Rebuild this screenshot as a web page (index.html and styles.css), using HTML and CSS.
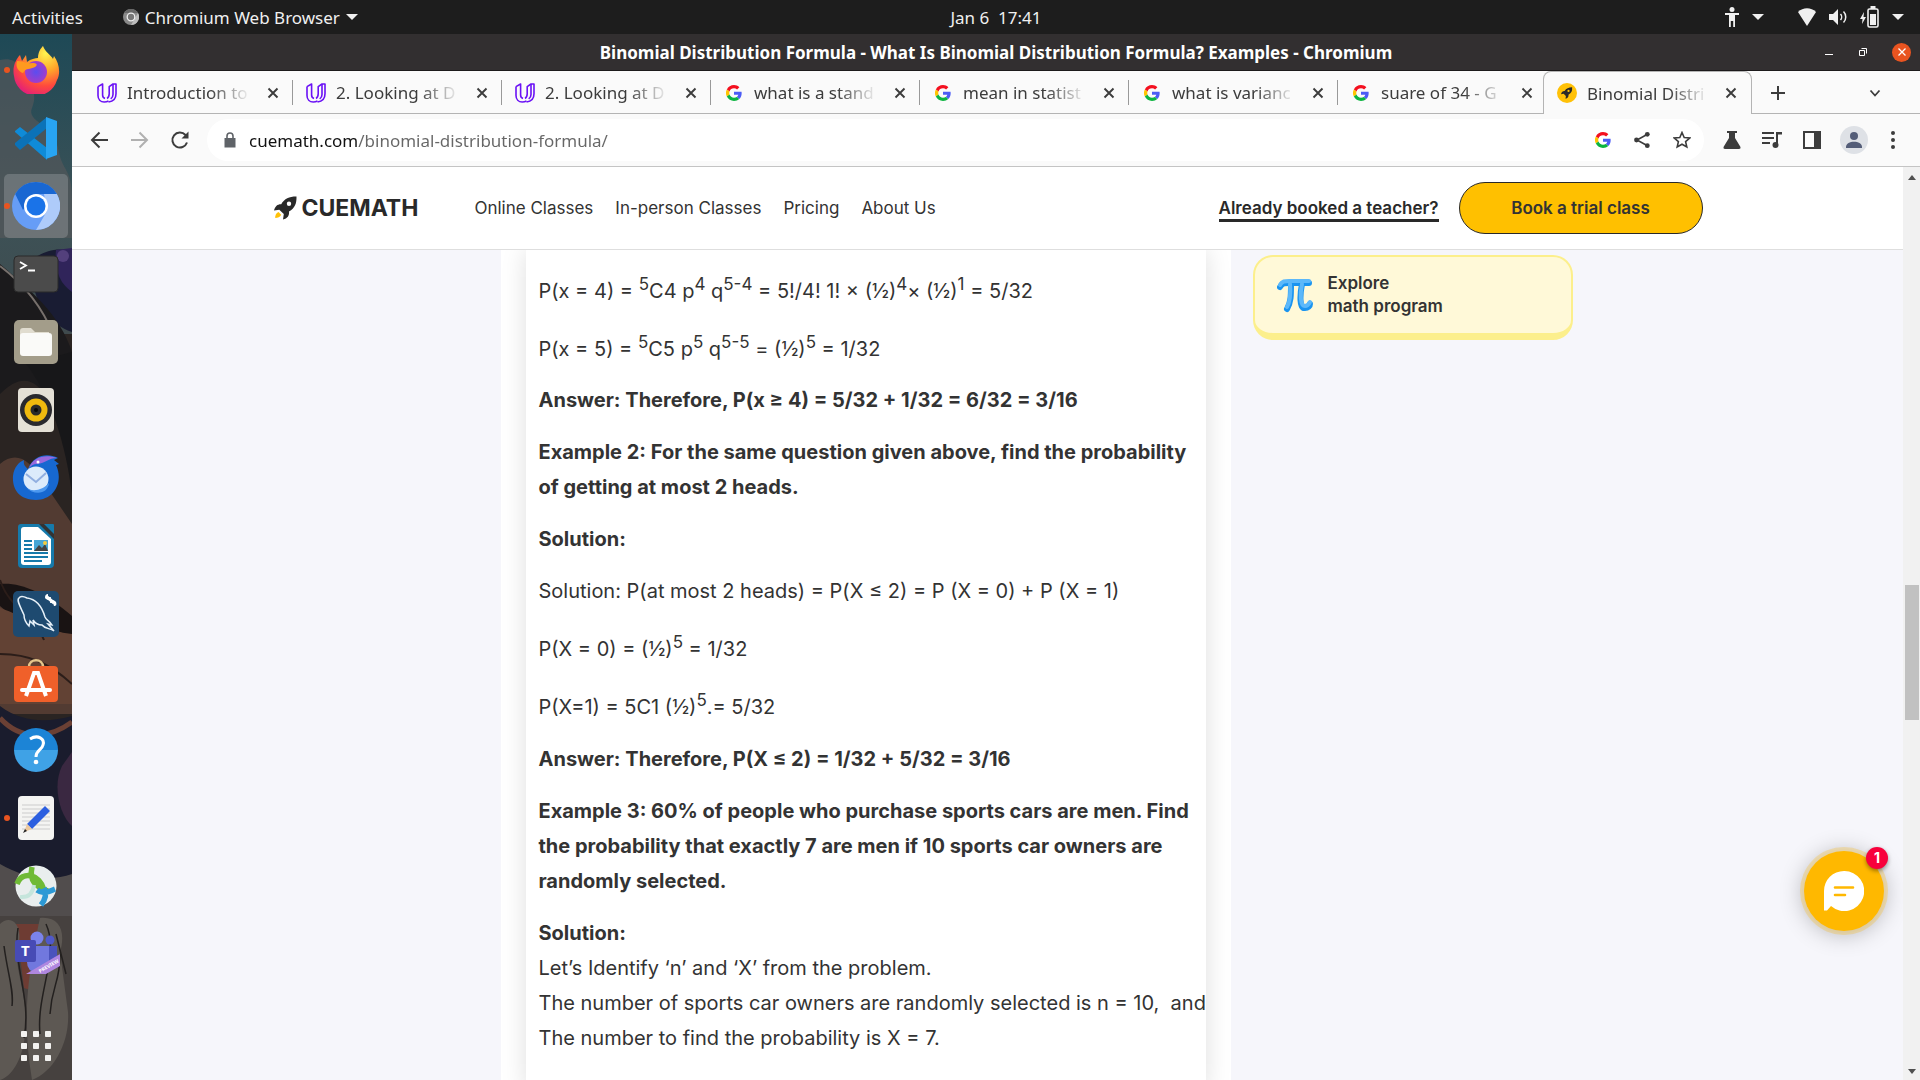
FILE: index.html
```html
<!DOCTYPE html>
<html lang="en">
<head>
<meta charset="utf-8">
<title>Binomial Distribution Formula - What Is Binomial Distribution Formula? Examples</title>
<link rel="stylesheet" href="styles.css">
</head>
<body>
<svg class="defs" aria-hidden="true">
  <defs>
    <symbol id="udacity" viewBox="0 0 20 20"><g fill="none" stroke="#6a11f5" stroke-width="1.6" stroke-linejoin="round"><path d="M1 3.600 5.600 1v11c0 2 1 3 2.400 3.600"/><path d="M1 3.600v8.800c0 4 2.600 6.600 6.200 6.600 1.600 0 3-.3 4.300-1"/><path d="M10 15.500c1.500-.8 2.200-2.200 2.200-4.700V3.600L16 1h3v9.800c0 4.600-3 7.700-7.500 8.200"/><path d="M16 1v10.400c0 2-.8 3.400-2.300 4.500"/></g></symbol>
    <symbol id="google" viewBox="0 0 48 48"><path fill="#f4101f" d="M24 10c3.500 0 6.700 1.200 9.200 3.600l6.900-6.900C35.900 2.700 30.500 0 24 0 14.600 0 6.500 5.400 2.600 13.200l8 6.200C12.400 13.700 17.700 10 24 10z"/><path fill="#4c5cf5" d="M47 24.500c0-1.600-.2-3.100-.4-4.500H24v9h12.900c-.6 3-2.300 5.500-4.800 7.200l7.700 6C44.400 38 47 31.800 47 24.500z"/><path fill="#ffc400" d="M10.500 28.600A14.500 14.500 0 0 1 10.500 19.400l-8-6.200A24 24 0 0 0 2.500 34.800z"/><path fill="#0cb440" d="M24 48c6.500 0 11.900-2.100 15.900-5.800l-7.700-6C30 37.700 27.200 38.500 24 38.500c-6.300 0-11.600-4.200-13.500-9.900l-8 6.200C6.500 42.600 14.600 48 24 48z"/></symbol>
    <symbol id="rocket" viewBox="0 0 24 24"><path fill="#292929" fill-rule="evenodd" d="M23.500.5C16.500.4 11.500 2.500 8.200 8.200 4.700 8 2.200 10 1 14.500l5.300-.8 4.500 4.200L10 23.500c4.500-1 6.500-4 6-8C22 12 23.700 7.500 23.500.5zM16 10a2.200 2.200 0 1 0 0-4.400A2.200 2.200 0 0 0 16 10z"/><path fill="#ffc107" d="M5.500 16C3 17 2 19.500 2.200 22c2.600 0 5-1 6-3.200z"/></symbol>
    <symbol id="close" viewBox="0 0 12 12"><path d="m1.500 1.500 9 9m0-9-9 9" stroke="currentColor" stroke-width="1.900"/></symbol>
    <symbol id="caret" viewBox="0 0 12 8"><path d="M0 1h12L6 7z" fill="currentColor"/></symbol>
  </defs>
</svg>

<div class="desktop">
  <header class="topbar">
    <div class="topbar-left">
      <button class="plain">Activities</button>
      <button class="plain app-menu">
        <svg width="16" height="16" viewBox="0 0 16 16"><circle cx="8" cy="8" r="8" fill="#8a8a8a"/><path d="M1 4a8 8 0 0 1 14 0H8z" fill="#686868"/><path d="M15 4a8 8 0 0 1-7 12l4-7z" fill="#bdbdbd"/><circle cx="8" cy="8" r="3.800" fill="#777" stroke="#eee" stroke-width="1.300"/></svg>
        Chromium Web Browser
        <svg width="12" height="8"><use href="#caret"/></svg>
      </button>
    </div>
    <time class="clock">Jan 6&nbsp; 17:41</time>
    <div class="topbar-right">
      <button class="plain" aria-label="Accessibility"><svg width="16" height="22" viewBox="0 0 16 22"><circle cx="8" cy="3.500" r="2.500" fill="currentColor"/><path d="M1 7h14v2h-4v12H9.200v-6H6.800v6H5V9H1z" fill="currentColor"/></svg><svg width="12" height="8"><use href="#caret"/></svg></button>
      <button class="plain status" aria-label="System">
        <svg width="18" height="20" viewBox="0 0 18 20"><path d="M0 5c5-5 13-5 18 0L9 19z" fill="currentColor"/></svg>
        <svg width="20" height="20" viewBox="0 0 20 20"><path d="M1 7h4l5-5v16l-5-5H1z" fill="currentColor"/><path d="M12.500 7c1.500 1.600 1.500 4.400 0 6M15.500 4.500c3 3 3 8 0 11" fill="none" stroke="currentColor" stroke-width="1.500"/></svg>
        <svg width="20" height="22" viewBox="0 0 20 22"><path d="M4 6 0 13h2.500L2 18l4-7H3.500z" fill="currentColor"/><rect x="8" y="3" width="10" height="18" rx="1.500" fill="none" stroke="currentColor" stroke-width="1.600"/><path d="M10.500 0h5v3h-5zM10 8h6v11h-6z" fill="currentColor"/></svg>
        <svg width="12" height="8"><use href="#caret"/></svg>
      </button>
    </div>
  </header>

  <div class="workspace">
    <nav class="dock" aria-label="Applications">
      <svg class="wallpaper" viewBox="0 0 72 1046" preserveAspectRatio="none" aria-hidden="true">
        <defs><linearGradient id="sky" x1="0" y1="0" x2="0" y2="1"><stop offset="0" stop-color="#1e4956"/><stop offset=".6" stop-color="#3d5257"/><stop offset="1" stop-color="#3f4a4d"/></linearGradient></defs>
        <rect width="72" height="1046" fill="#2a2422"/>
        <rect width="72" height="300" fill="url(#sky)"/>
        <path d="M0 26c16-4 24 8 18 22 14 0 20 12 14 26s22 16 26 40 14 20 14 50v40H0z" fill="#56575a" opacity=".65"/>
        <path d="M32 226c10-8 26-14 40-8v80c-24-8-42-30-40-72z" fill="#191c33"/><path d="M56 216c-2 20 4 34 16 42v-44z" fill="#30245a"/><circle cx="63" cy="222" r="6" fill="#53407c"/>
        <path d="M0 230c30 26 60 50 72 88v110C50 350 30 330 0 360z" fill="#1b1a1c"/>
        <path d="M0 232c24 18 42 40 54 70" stroke="#77706c" stroke-width="2" fill="none"/>
        <path d="M0 430c16-14 30-4 42 16l30 44v190H0z" fill="#523b32"/>
        <path d="M26 330c24 30 40 80 46 130V318z" fill="#171719"/>
        <path d="M0 550c20-2 44 8 72 32v22C44 600 20 590 0 572z" fill="#191313"/>
        <path d="M0 574c24 8 48 24 72 26v70H0z" fill="#624234"/>
        <path d="M0 620c30 0 50 10 72 30M0 546c10 30 34 34 44 60" stroke="#2b1d19" stroke-width="2" fill="none"/>
        <path d="M0 672c24 18 50 16 72 10v170H0z" fill="#1a1c2d"/><path d="M62 732c-10 20-2 50 10 60v-74z" fill="#3a2841"/>
        <path d="M0 684c20 22 48 22 72 4" stroke="#6b4034" stroke-width="5" fill="none"/>
        <path d="M0 830c24 14 50 18 72 10v46H0z" fill="#514d4d"/>
        <path d="M0 882h72v164H0z" fill="#46413f"/><path d="M16 890h26v70l-18-6z" fill="#6e3c33"/>
        <path d="M0 890c10-10 24 0 18 22s14 54 6 96c-4 24-16 36-24 38zM40 884c20-2 26 14 20 34l8 60c2 30-14 60-36 68-8-50-8-90 8-162z" fill="#5d5853"/>
        <path d="M18 894c-6 36 14 70 6 110M46 890c14 30-10 70-6 110m20-80c0 30-8 30-10 60M4 912c4 30 10 44 8 60M56 900l10 40" stroke="#23201f" stroke-width="1.500" fill="none"/>
      </svg>
      <button class="app running" aria-label="Firefox"><svg viewBox="0 0 48 48"><defs><radialGradient id="ff" cx=".7" cy=".15" r="1"><stop offset="0" stop-color="#fff44f"/><stop offset=".35" stop-color="#ffa72a"/><stop offset=".65" stop-color="#ff4a3c"/><stop offset="1" stop-color="#d9108f"/></radialGradient><radialGradient id="fp"><stop offset="0" stop-color="#5b4df0"/><stop offset="1" stop-color="#a33cc8"/></radialGradient></defs><path d="M26 12c0-6 3-10 5-12 2 6 8 9 10 13l1-3c5 7 7 17 3 24A22 22 0 0 1 2 30C0 21 4 13 8 9l2 6 4-6 1 7c4-3 8-4 11-4z" fill="url(#ff)"/><circle cx="24" cy="26" r="11" fill="url(#fp)"/><path d="M5 15c6 0 9 3 15 2 5 0 6 2 3 4-5 3-9 0-12 6-4-1-8-6-6-12z" fill="#ff9a1f"/></svg></button>
      <button class="app" aria-label="Visual Studio Code"><svg viewBox="0 0 48 48"><path d="m3 17 5-4 27 21v12L3 18z" fill="#0f8bd8"/><path d="m3 31 5 5 27-22V3L3 29z" fill="#0b72b8"/><path d="m34 3 11 4v34l-11 4z" fill="#28a4f2"/></svg></button>
      <button class="app running active" aria-label="Chromium"><svg viewBox="0 0 48 48"><circle cx="24" cy="24" r="24" fill="#669df6"/><path d="M24 0a24 24 0 0 1 20.800 12H24L11 28 3.200 12A24 24 0 0 1 24 0z" fill="#1967d2"/><path d="M44.800 12A24 24 0 0 1 24 48l11-19-3-17z" fill="#aecbfa"/><circle cx="24" cy="24" r="12" fill="#fff"/><circle cx="24" cy="24" r="9.500" fill="#1a73e8"/></svg></button>
      <button class="app" aria-label="Terminal"><svg viewBox="0 0 48 48"><rect x="2" y="6" width="44" height="36" rx="4" fill="#4b4b4b" stroke="#2a2a2a"/><path d="m8 12 6 3.500L8 19m8 1.500h7" fill="none" stroke="#fff" stroke-width="1.800"/></svg></button>
      <button class="app" aria-label="Files"><svg viewBox="0 0 48 48"><rect x="2" y="2" width="44" height="44" rx="5" fill="#a39d8a"/><path d="M8 13q0-3 3-3h8l4 4h14v8H8z" fill="#e0dccf"/><rect x="8" y="15" width="32" height="23" rx="3" fill="#fafaf8"/></svg></button>
      <button class="app" aria-label="Rhythmbox"><svg viewBox="0 0 48 48"><rect x="6" y="2" width="36" height="44" rx="4" fill="#e4e0d6"/><circle cx="24" cy="24" r="16" fill="#29292e"/><circle cx="24" cy="24" r="11.500" fill="#efb90e"/><circle cx="24" cy="24" r="5.500" fill="#2a2a2a"/><circle cx="24" cy="24" r="2" fill="#080808"/></svg></button>
      <button class="app" aria-label="Thunderbird"><svg viewBox="0 0 48 48"><path d="M1 22C2 13 7 8 12 6c-1 5 2 7 4 9C22 0 36-1 46 4l-4 2 5 4-3 1c8 17-2 35-20 35C8 46 0 36 1 22z" fill="#1768d0"/><path d="M17 14c4-11 16-14 28-10-9 0-11 5-20 6-4 0-6 2-8 4z" fill="#9869dd"/><circle cx="24" cy="25" r="12.500" fill="#dcebfb"/><path d="m14 20 10 8 10-9" fill="none" stroke="#91afe0" stroke-width="2"/><path d="M13 33c7 6 18 3 24-4-1 10-13 14-24 4z" fill="#4c98ef"/><circle cx="26" cy="8" r="1.500" fill="#fff"/></svg></button>
      <button class="app" aria-label="LibreOffice Writer"><svg viewBox="0 0 48 48"><path d="M9 2h32q1 0 1 1v39q0 4-4 4H10q-4 0-4-4V5q0-3 3-3z" fill="#167aab"/><path d="M12 5h14l13 12v23q0 3-3 3H12q-3 0-3-3V8q0-3 3-3z" fill="#fff"/><path d="M27 2h5l10 10v5z" fill="#333"/><path d="M12 19h8m-8 4h8m-8 4h8m-8 4h24m-24 4h24m-24 4h18" stroke="#167aab" stroke-width="2"/><path d="M22 18h14v11H22z" fill="#46a6d6"/><path d="m22 29 5-6 3 3 3-4 3 7z" fill="#444"/><circle cx="33" cy="21" r="2" fill="#f4cc40"/></svg></button>
      <button class="app" aria-label="MySQL Workbench"><svg viewBox="0 0 48 48"><rect x="1" y="1" width="46" height="46" rx="5" fill="#1e4a70"/><path d="M12 25C9 18 4 10 7 8c2-3 6-1 8 0 9 1 15 9 18 19 1 3 5 4 7 8l-4-1 6 7c-4-3-9-2-12-6-4 0-7-2-9-5l1 5-4-4-1 5c-3-3-5-7-5-11z" fill="none" stroke="#e6f0f8" stroke-width="1.500"/><path d="m35 7 7 6" stroke="#fff" stroke-width="3"/><path d="M33 8c0-3 1-4 3-4v3h3c0 3-4 4-6 1zM44 12c1 3 0 4-2 4l-1-3h-3c0-3 4-4 6-1z" fill="#fff"/></svg></button>
      <button class="app" aria-label="Ubuntu Software"><svg viewBox="0 0 48 48"><path d="M17 9c0-9 14-9 14 0" fill="none" stroke="#e5c68b" stroke-width="2.500"/><rect x="2" y="8" width="44" height="36" rx="4" fill="#f0602a"/><path d="M10 32h28" stroke="#fff" stroke-width="4" stroke-linecap="round"/><path d="m14 38 8-23h4l8 23" fill="none" stroke="#fff" stroke-width="4"/></svg></button>
      <button class="app" aria-label="Help"><svg viewBox="0 0 48 48"><path d="M2 24a22 22 0 0 1 44 0z" fill="#1c84d6"/><path d="M2 24a22 22 0 0 0 44 0z" fill="#3fa2e6"/><path d="M18 13c8-5 15 0 13 6-1 5-7 5-7 12" fill="none" stroke="#fff" stroke-width="3"/><circle cx="24" cy="36" r="2.300" fill="#fff"/></svg></button>
      <button class="app running" aria-label="Text Editor"><svg viewBox="0 0 48 48"><rect x="6" y="2" width="36" height="44" rx="4" fill="#f4f4f2"/><path d="M10 11h28M10 15h28M10 19h28M10 23h28M10 27h28M10 31h28M10 35h28" stroke="#ccc"/><path d="m15 30 18-18 5 5-18 18z" fill="#2c5fe0"/><path d="m15 30 5 5-8 3z" fill="#ecc9a0"/><path d="m13 35-2 4 4-2z" fill="#222"/></svg></button>
      <button class="app" aria-label="Cisco AnyConnect"><svg viewBox="0 0 48 48"><circle cx="24" cy="24" r="20.500" fill="#e9eeee"/><path d="M5 22C10 8 28 12 32 28M20 5c-3 14 4 20 16 24" fill="none" stroke="#6fba36" stroke-width="5.500"/><path d="M8 35c10 1 13-5 14-12" fill="none" stroke="#c5e5dc" stroke-width="4"/><path d="M32 26c3 6 1 12-3 17M25 28c7 5 13 1 18-1" fill="none" stroke="#2c99d5" stroke-width="5.500"/></svg></button>
      <button class="app" aria-label="Microsoft Teams"><svg viewBox="0 0 48 48"><circle cx="25" cy="8" r="6.500" fill="#7b83eb"/><circle cx="38" cy="10" r="4.500" fill="#5059c9"/><path d="M32 16h13v16q-8 12-13 0z" fill="#4b53bc"/><path d="M18 16h19v16q-2 10-12 10T15 32z" fill="#7178de"/><rect x="3" y="10" width="21" height="22" rx="2" fill="#474bb5"/><path d="m14 44 34-20v12L34 44z" fill="#af87df"/><text x="9" y="26" class="teams-letter">T</text><text x="28" y="43" class="teams-tag" transform="rotate(-30 28 43)">PREVIEW</text></svg></button>
      <button class="app show-apps" aria-label="Show Applications"><svg viewBox="0 0 48 48"><path d="M9.500 9.500h5v5h-5zm12 0h5v5h-5zm12 0h5v5h-5zm-24 12h5v5h-5zm12 0h5v5h-5zm12 0h5v5h-5zm-24 12h5v5h-5zm12 0h5v5h-5zm12 0h5v5h-5z" fill="#f3f2f0" stroke="#f3f2f0" stroke-linejoin="round"/></svg></button>
    </nav>

    <div class="window">
      <div class="titlebar">
        <span class="window-title">Binomial Distribution Formula - What Is Binomial Distribution Formula? Examples - Chromium</span>
        <div class="window-controls">
          <button class="plain" aria-label="Minimize"><svg width="10" height="10"><path d="M1 7.500h8" stroke="currentColor"/></svg></button>
          <button class="plain" aria-label="Restore"><svg width="10" height="10"><path d="M1.500 3.500h5v5h-5zM3.500 1.500h5v5" fill="none" stroke="currentColor"/></svg></button>
          <button class="plain quit" aria-label="Close"><svg width="8" height="8" viewBox="0 0 8 8"><path d="m.5.5 7 7m0-7-7 7" stroke="currentColor" stroke-width="1.300"/></svg></button>
        </div>
      </div>

      <div class="tabs">
        <div class="tab"><svg class="favicon"><use href="#udacity"/></svg><a href="#">Introduction to</a><button class="plain" aria-label="Close tab"><svg width="12" height="12"><use href="#close"/></svg></button></div>
        <div class="tab"><svg class="favicon"><use href="#udacity"/></svg><a href="#">2. Looking at D</a><button class="plain" aria-label="Close tab"><svg width="12" height="12"><use href="#close"/></svg></button></div>
        <div class="tab"><svg class="favicon"><use href="#udacity"/></svg><a href="#">2. Looking at D</a><button class="plain" aria-label="Close tab"><svg width="12" height="12"><use href="#close"/></svg></button></div>
        <div class="tab"><svg class="favicon g"><use href="#google"/></svg><a href="#">what is a stand</a><button class="plain" aria-label="Close tab"><svg width="12" height="12"><use href="#close"/></svg></button></div>
        <div class="tab"><svg class="favicon g"><use href="#google"/></svg><a href="#">mean in statist</a><button class="plain" aria-label="Close tab"><svg width="12" height="12"><use href="#close"/></svg></button></div>
        <div class="tab"><svg class="favicon g"><use href="#google"/></svg><a href="#">what is varianc</a><button class="plain" aria-label="Close tab"><svg width="12" height="12"><use href="#close"/></svg></button></div>
        <div class="tab"><svg class="favicon g"><use href="#google"/></svg><a href="#">suare of 34 - G</a><button class="plain" aria-label="Close tab"><svg width="12" height="12"><use href="#close"/></svg></button></div>
        <div class="tab current"><svg class="favicon" viewBox="0 0 20 20"><circle cx="10" cy="10" r="10" fill="#ffc107"/><use href="#rocket" x="3.500" y="4" width="12" height="12"/></svg><a href="#">Binomial Distri</a><button class="plain" aria-label="Close tab"><svg width="12" height="12"><use href="#close"/></svg></button></div>
        <div class="tab-tools">
          <button class="plain" aria-label="New tab"><svg width="16" height="16"><path d="M8 1v14M1 8h14" stroke="currentColor" stroke-width="2"/></svg></button>
          <button class="plain" aria-label="Search tabs"><svg width="12" height="12"><path d="m1.500 3.500 4.500 5 4.500-5" fill="none" stroke="currentColor" stroke-width="1.800"/></svg></button>
        </div>
      </div>

      <div class="toolbar">
        <div class="nav-buttons">
          <button class="plain" aria-label="Back"><svg width="20" height="20" viewBox="0 0 20 20"><path d="M18 10H2m7.500-7.500L2 10l7.500 7.500" fill="none" stroke="currentColor" stroke-width="2"/></svg></button>
          <button class="plain muted" aria-label="Forward"><svg width="20" height="20" viewBox="0 0 20 20"><path d="M1 10h16M9.500 2.500 17 10l-7.500 7.500" fill="none" stroke="currentColor" stroke-width="2"/></svg></button>
          <button class="plain" aria-label="Reload"><svg width="20" height="20" viewBox="0 0 20 20"><path d="M17 12.500A7.500 7.500 0 1 1 15.500 5l1 1" fill="none" stroke="currentColor" stroke-width="2"/><path d="M18.500 1.500v7h-7z" fill="currentColor"/></svg></button>
        </div>
        <div class="omnibox">
          <svg width="12" height="16" viewBox="0 0 12 16"><path d="M.5 6h11v9.500H.5z" fill="#5f6368"/><path d="M3 7V4a3 3 0 0 1 6 0v3" fill="none" stroke="#5f6368" stroke-width="1.600"/></svg>
          <input type="text" aria-label="Address" value="cuemath.com/binomial-distribution-formula/">
          <div class="omni-icons">
            <button class="plain" aria-label="Search with Google"><svg width="16" height="16"><use href="#google"/></svg></button>
            <button class="plain" aria-label="Share"><svg width="18" height="18" viewBox="0 0 18 18"><path d="M14 3.500 4 9l10 5.500" fill="none" stroke="currentColor" stroke-width="1.600"/><circle cx="14.300" cy="3.300" r="2.400" fill="currentColor"/><circle cx="3.500" cy="9" r="2.400" fill="currentColor"/><circle cx="14.300" cy="14.700" r="2.400" fill="currentColor"/></svg></button>
            <button class="plain" aria-label="Bookmark"><svg width="18" height="18" viewBox="0 0 18 18"><path d="m9 1.500 2.200 5 5.500.5-4.100 3.600 1.200 5.400L9 13.200 4.200 16l1.200-5.400L1.300 7l5.500-.5z" fill="none" stroke="currentColor" stroke-width="1.600"/></svg></button>
          </div>
        </div>
        <div class="actions">
          <button class="plain" aria-label="Experiments"><svg width="18" height="18" viewBox="0 0 18 18"><path d="M4 0h10v2h-2v5l5.500 9q.5 2-1.500 2H2q-2 0-1.500-2L6 7V2H4z" fill="currentColor"/></svg></button>
          <button class="plain" aria-label="Media"><svg width="20" height="18" viewBox="0 0 20 18"><path d="M0 2h12M0 7h12M0 12h8" stroke="currentColor" stroke-width="2"/><path d="M14 1h6v2.500h-4V14h-2z" fill="currentColor"/><circle cx="13.500" cy="14" r="3" fill="currentColor"/></svg></button>
          <button class="plain" aria-label="Side panel"><svg width="18" height="18"><path d="M1 1h16v16H1z" fill="none" stroke="currentColor" stroke-width="2"/><path d="M11 0h7v18h-7z" fill="currentColor"/></svg></button>
          <button class="plain" aria-label="Profile"><svg width="28" height="28" viewBox="0 0 28 28"><circle cx="14" cy="14" r="14" fill="#dee1e6"/><circle cx="14" cy="10" r="4" fill="#545d78"/><path d="M6 21c0-7 16-7 16 0v1H6z" fill="#545d78"/></svg></button>
          <button class="plain" aria-label="Menu"><svg width="4" height="18"><circle cx="2" cy="2" r="2" fill="currentColor"/><circle cx="2" cy="9" r="2" fill="currentColor"/><circle cx="2" cy="16" r="2" fill="currentColor"/></svg></button>
        </div>
      </div>

      <div class="viewport">
        <div class="page">
          <header class="site-header">
            <div class="container site-bar">
              <a class="brand" href="#"><svg width="24" height="24"><use href="#rocket"/></svg>CUEMATH</a>
              <nav class="site-nav"><a href="#">Online Classes</a><a href="#">In-person Classes</a><a href="#">Pricing</a><a href="#">About Us</a></nav>
              <a class="booked" href="#">Already booked a teacher?</a>
              <button class="trial">Book a trial class</button>
            </div>
          </header>
          <div class="container columns">
            <main class="article">
              <div class="sheet">
                <p>P(x = 4) = <sup>5</sup>C4 p<sup>4</sup> q<sup>5-4</sup> = 5!/4! 1! × (½)<sup>4</sup>× (½)<sup>1</sup> = 5/32</p>
                <p>P(x = 5) = <sup>5</sup>C5 p<sup>5</sup> q<sup>5-5</sup> = (½)<sup>5</sup> = 1/32</p>
                <p><strong>Answer: Therefore, P(x ≥ 4) = 5/32 + 1/32 = 6/32 = 3/16</strong></p>
                <p><strong>Example 2: For the same question given above, find the probability<br>of getting at most 2 heads.</strong></p>
                <p><strong>Solution:</strong></p>
                <p>Solution: P(at most 2 heads) = P(X ≤ 2) = P (X = 0) + P (X = 1)</p>
                <p>P(X = 0) = (½)<sup>5</sup> = 1/32</p>
                <p>P(X=1) = 5C1 (½)<sup>5</sup>.= 5/32</p>
                <p><strong>Answer: Therefore, P(X ≤ 2) = 1/32 + 5/32 = 3/16</strong></p>
                <p><strong>Example 3: 60% of people who purchase sports cars are men. Find<br>the probability that exactly 7 are men if 10 sports car owners are<br>randomly selected.</strong></p>
                <p><strong>Solution:</strong><br>Let’s Identify ‘n’ and ‘X’ from the problem.<br>The number of sports car owners are randomly selected is n = 10,&nbsp; and<br>The number to find the probability is X = 7.</p>
              </div>
            </main>
            <aside>
              <a class="explore" href="#">
                <svg width="36" height="36" viewBox="0 0 36 36"><g fill="none" stroke="#1a94f0" stroke-width="6" stroke-linecap="round"><path d="M3 10c2-4 5-4 9-4h20"/><path d="M14 7c0 12 0 18-4 25M25 7c-2 10-3 25 3 24 3 0 5-2 5-4"/></g><g fill="none" stroke="#5cb8fa" stroke-width="4" stroke-linecap="round"><path d="M3 8c2-4 5-4 9-4h20"/><path d="M13 7c1 12 0 18-3 23M25 7c-2 10-2 22 3 22 3 0 4-2 5-4"/></g></svg>
                <span>Explore<br>math program</span>
              </a>
            </aside>
          </div>
          <button class="chat" aria-label="Open chat, 1 unread message">
            <svg width="40" height="40" viewBox="0 0 40 40"><path d="M20 0a20 20 0 1 1-13 35l-4 4.500H0V20A20 20 0 0 1 20 0z" fill="#fff"/><path d="M11 16.500h18M11 24h10" stroke="#ffb800" stroke-width="2.600" stroke-linecap="round"/></svg>
            <span class="badge">1</span>
          </button>
        </div>
        <div class="scrollbar" aria-hidden="true">
          <svg width="8" height="5"><path d="M0 5 4 0l4 5z" fill="#505050"/></svg>
          <div class="track"><div class="thumb"></div></div>
          <svg width="8" height="5"><path d="M0 0h8L4 5z" fill="#505050"/></svg>
        </div>
      </div>
    </div>
  </div>
</div>
</body>
</html>
```
FILE: styles.css
```css
* { box-sizing: border-box; }

body {
  margin: 0;
  font-family: "Noto Sans", sans-serif;
  font-size: 17px;
  color: #3c3c3c;
}

a { color: inherit; text-decoration: none; }
svg { display: block; flex: none; }
.defs { position: absolute; width: 0; height: 0; }

button, input { font: inherit; }

.plain {
  display: flex;
  align-items: center;
  flex: none;
  padding: 0;
  border: 0;
  background: none;
  color: inherit;
}

.desktop {
  display: flex;
  flex-direction: column;
  height: 100vh;
  overflow: hidden;
}

/* GNOME top bar */
.topbar {
  display: grid;
  grid-template-columns: 1fr auto 1fr;
  align-items: center;
  height: 34px;
  padding: 0 16px 0 12px;
  background: #1d1d1d;
  color: #f0f0f0;
}
.topbar-left { display: flex; gap: 40px; }
.app-menu { gap: 6px; }
.clock { padding-left: 76px; }
.topbar-right { display: flex; justify-content: flex-end; gap: 34px; }
.topbar-right .plain { gap: 12px; }

.workspace { display: flex; flex: 1; min-height: 0; }

/* Dock */
.dock {
  position: relative;
  display: flex;
  flex-direction: column;
  flex: none;
  gap: 4px;
  width: 72px;
  padding: 4px 4px 2px;
  overflow: hidden;
}
.wallpaper { position: absolute; inset: 0; width: 100%; height: 100%; }
.app {
  position: relative;
  display: grid;
  place-items: center;
  flex: none;
  height: 64px;
  padding: 0;
  border: 0;
  border-radius: 5px;
  background: none;
}
.app svg { width: 48px; height: 48px; }
.app.active { background: rgba(255, 255, 255, 0.18); }
.app.running::before {
  content: "";
  position: absolute;
  left: 0;
  top: 29px;
  width: 6px;
  height: 6px;
  border-radius: 50%;
  background: #e95420;
}
.show-apps { margin-top: auto; }
.teams-letter { font: bold 15px "Noto Sans", sans-serif; fill: #fff; }
.teams-tag { font: bold 5px "Noto Sans", sans-serif; fill: #fff; }

/* Browser window */
.window { display: flex; flex: 1; flex-direction: column; min-width: 0; }

.titlebar {
  display: grid;
  grid-template-columns: 106px 1fr 106px;
  align-items: center;
  height: 37px;
  border-bottom: 1px solid #1c1a1b;
  background: #322f30;
  color: #fff;
}
.window-title { grid-column: 2; text-align: center; font-weight: bold; white-space: nowrap; }
.window-controls { display: flex; align-items: center; justify-content: flex-end; gap: 24px; padding-right: 9px; }
.quit { justify-content: center; width: 19px; height: 19px; border-radius: 50%; background: #e95420; }

.tabs {
  display: flex;
  height: 43px;
  padding-left: 12px;
  background: #fafafa;
  box-shadow: inset 0 -1px #b4b4b4;
}
.tab {
  position: relative;
  display: flex;
  align-items: center;
  gap: 10px;
  flex: 0 1 209px;
  min-width: 0;
  padding: 0 14px 0 13px;
}
.tab:not(.current)::after {
  content: "";
  position: absolute;
  right: 0;
  top: 9px;
  width: 1px;
  height: 25px;
  background: #999;
}
.tab:has(+ .current)::after { display: none; }
.tab a {
  flex: 1;
  min-width: 0;
  white-space: nowrap;
  -webkit-mask-image: linear-gradient(90deg, #000 66%, transparent 98%);
  mask-image: linear-gradient(90deg, #000 66%, transparent 98%);
}
.tab .plain { margin-left: 4px; }
.favicon { width: 20px; height: 20px; }
.favicon.g { padding: 2px; }
.tab.current {
  margin-left: -4px;
  border: 1px solid #b4b4b4;
  border-bottom: 0;
  border-radius: 8px 8px 0 0;
  background: #fafafa;
}
.tab-tools {
  display: flex;
  flex: 1;
  align-items: center;
  justify-content: space-between;
  padding: 0 39px 0 18px;
}

.toolbar {
  display: flex;
  align-items: center;
  height: 53px;
  padding: 0 25px 0 18px;
  border-bottom: 1px solid #c4c4c4;
  background: #fafafa;
}
.nav-buttons { display: flex; gap: 20px; width: 117px; }
.muted { color: #b0b0b0; }
.omnibox {
  display: flex;
  flex: 1;
  align-items: center;
  gap: 13px;
  height: 42px;
  padding: 0 13px 0 17px;
  border-radius: 21px;
  background: #fff;
}
.omnibox input {
  flex: 1;
  padding: 0;
  border: 0;
  outline: 0;
  background: linear-gradient(90deg, #111 108px, #666 108px);
  -webkit-background-clip: text;
  background-clip: text;
  color: transparent;
}
.omni-icons { display: flex; align-items: center; gap: 22px; }
.actions { display: flex; align-items: center; gap: 21px; padding-left: 19px; }
.actions .plain:nth-child(4) { margin: 0 2px 0 -2px; }

/* Page */
.viewport { display: flex; flex: 1; min-height: 0; }
.page {
  position: relative;
  display: flex;
  flex: 1;
  flex-direction: column;
  min-width: 0;
  overflow: hidden;
  background: #f6f6fb;
  color: #333;
  font-family: Inter, sans-serif;
}
.container { width: 100%; max-width: 1430px; margin: 0 auto; }

.site-header { flex: none; border-bottom: 1px solid #dedede; background: #fff; }
.site-bar { display: flex; align-items: center; height: 82px; }
.brand { display: flex; align-items: center; gap: 5px; font-size: 23px; font-weight: 700; color: #292929; }
.site-nav { display: flex; gap: 22px; margin-left: 56px; }
.booked {
  margin-left: auto;
  border: solid #292929;
  border-width: 3px 0;
  border-top-color: transparent;
  font-weight: 600;
  color: #292929;
  line-height: 21px;
}
.trial {
  width: 244px;
  height: 52px;
  margin-left: 20px;
  border: 1px solid #292929;
  border-radius: 26px;
  background: #ffc000;
  color: #333;
  font-weight: 600;
}

.columns {
  display: grid;
  grid-template-columns: 730px 320px;
  gap: 22px;
  flex: 1;
  min-height: 0;
  padding-left: 228px;
}
.article { padding: 0 25px; background: #fff; overflow: hidden; }
.sheet {
  min-height: 100%;
  padding: 18px 0 18px 13px;
  background: #fff;
  box-shadow: 0 0 24px rgba(0, 0, 0, 0.13);
  font-size: 20px;
  line-height: 35px;
  white-space: nowrap;
}
.sheet p { margin: 0 0 17px; }
.sheet sup { font-size: 17px; line-height: 33px; }
.sheet strong { font-weight: 700; }

.explore {
  display: flex;
  align-items: center;
  gap: 15px;
  height: 85px;
  margin-top: 5px;
  padding: 0 22px;
  border: 2px solid #fcef8c;
  border-bottom-width: 7px;
  border-radius: 20px;
  background: #fff9d8;
  font-weight: 600;
  line-height: 23px;
}

.chat {
  position: absolute;
  right: 19px;
  bottom: 149px;
  display: grid;
  place-items: center;
  width: 80px;
  height: 80px;
  padding: 0;
  border: 0;
  border-radius: 50%;
  background: #ffb800;
  box-shadow: 0 0 0 4px rgba(255, 184, 0, 0.25), 0 2px 24px rgba(0, 0, 0, 0.3);
}
.badge {
  position: absolute;
  top: -4px;
  right: -4px;
  width: 22px;
  height: 22px;
  border-radius: 50%;
  background: #f8003c;
  box-shadow: 0 2px 4px rgba(0, 0, 0, 0.4);
  color: #fff;
  font-size: 14px;
  font-weight: 700;
  line-height: 22px;
}

.scrollbar {
  display: flex;
  flex-direction: column;
  align-items: center;
  width: 17px;
  padding: 8px 0 6px;
  background: #f1f1f1;
}
.track {
  display: grid;
  grid-template-rows: 401fr 135fr 345fr;
  flex: 1;
  width: 14px;
  margin: 4px 0;
}
.thumb { grid-row: 2; background: #c1c1c1; }
```
